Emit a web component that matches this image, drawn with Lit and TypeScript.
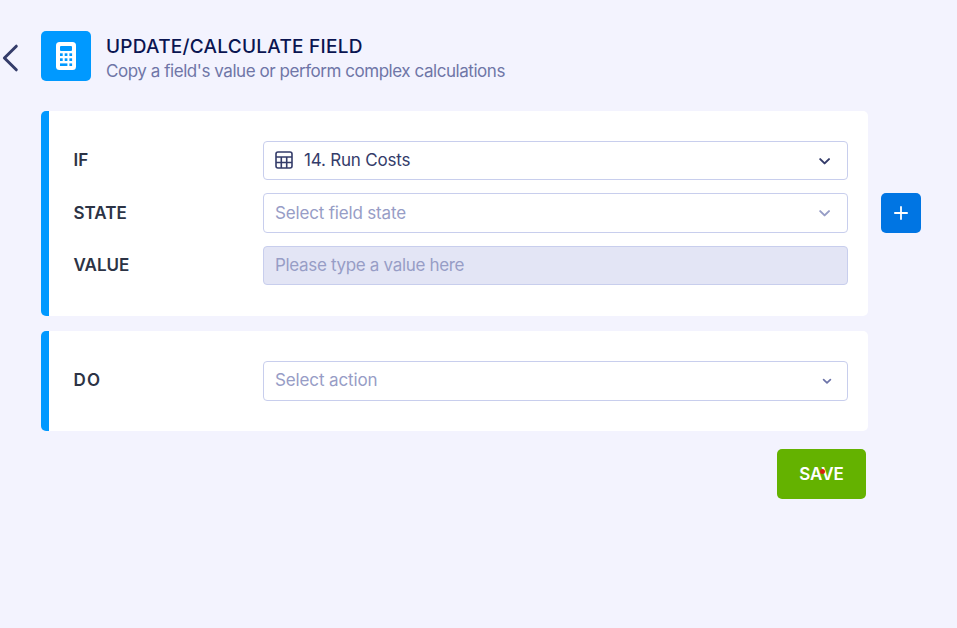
import { LitElement, html, css, svg, nothing } from "lit";
import { customElement, property } from "lit/decorators.js";
import { classMap } from "lit/directives/class-map.js";

const chevron = (size: "large" | "small") => html`
  <svg class="chevron" width="14" height="14" viewBox="0 0 14 14" fill="none" stroke="currentColor"
    stroke-linecap="round" stroke-linejoin="round">
    ${size === "large"
      ? svg`<path d="M2.2 5.1 L6.6 9.4 L11 5.1" stroke-width="2" />`
      : svg`<path d="M5.6 5.6 L9 8.8 L12.4 5.6" stroke-width="1.7" />`}
  </svg>`;

const tableIcon = html`
  <svg class="table-icon" width="18" height="18" viewBox="0 0 18 18" fill="none" stroke="currentColor" stroke-width="1.6">
    <rect x="1" y="1" width="16" height="16" rx="2" />
    <path d="M1 6H17M1 11.5H17M6.3 6V17M11.7 6V17" />
  </svg>`;

@customElement("rule-field")
export class RuleField extends LitElement {
  @property() label = "";
  @property() text = "";
  @property() kind = "select";
  @property() arrow: "large" | "small" = "large";
  @property({ type: Boolean }) filled = false;

  static styles = css`
    :host { display: flex; align-items: stretch; }
    .label {
      width: 189.5px; flex: none; display: flex; align-items: center; box-sizing: border-box;
      padding-bottom: var(--lift, 0px); letter-spacing: var(--label-tracking, 0);
      font-size: 17px; font-weight: 600; color: #2c3345;
    }
    .box {
      flex: 1; display: flex; align-items: center; box-sizing: border-box;
      border: 1px solid #c8ceed; border-radius: 4px; background: #fff;
      padding: 0 15px 0 11px; color: #979dc6; font-size: 17px;
    }
    .box.filled { color: #343c6a; }
    .box.input { background: #e3e5f5; }
    .table-icon { margin: 0 11px 1px 0; flex: none; }
    .value {
      flex: 1; white-space: nowrap; letter-spacing: var(--value-tracking, 0);
      padding-bottom: var(--lift, 0px);
    }
    .chevron { flex: none; }
    .arrow { display: flex; }
    .arrow.small { color: #6c73a8; }
  `;

  render() {
    return html`
      <span class="label">${this.label}</span>
      <div class=${classMap({ box: true, filled: this.filled, input: this.kind === "input" })}>
        ${this.filled ? tableIcon : nothing}
        <span class="value">${this.text}</span>
        ${this.kind === "select"
          ? html`<span class=${classMap({ arrow: true, small: this.arrow === "small" })}>${chevron(this.arrow)}</span>`
          : nothing}
      </div>`;
  }
}

@customElement("app-root")
export class AppRoot extends LitElement {
  static styles = css`
    :host {
      display: block; box-sizing: border-box; height: 628px; overflow: hidden;
      background: #f3f3fe; font-family: Inter, "Liberation Sans", sans-serif;
      padding-top: 31px;
    }
    header { display: flex; align-items: center; height: 50px; }
    .back { width: 41px; flex: none; display: flex; color: #343c6a; padding-top: 4px; box-sizing: border-box; }
    .badge {
      width: 50px; height: 50px; border-radius: 5px; background: #0099ff; flex: none;
      display: flex; align-items: center; justify-content: center;
    }
    .titles { margin-left: 15px; padding-top: 6px; white-space: nowrap; }
    h1 { margin: 0; font-size: 19px; font-weight: 500; line-height: 25px; letter-spacing: 0.26px; color: #0a1551; }
    p { margin: 0; font-size: 17px; line-height: 25px; letter-spacing: -0.45px; color: #6f76a7; }
    .row { display: flex; align-items: center; margin: 30px 0 0 41px; }
    .row + .row { margin-top: 15px; }
    .card {
      width: 827px; box-sizing: border-box; background: #fff; border-left: 8px solid #0099ff;
      border-radius: 5px; padding: 30px 20px 30px 24.5px;
      display: flex; flex-direction: column; gap: 13px;
    }
    .conditions { padding-bottom: 31px; }
    rule-field { height: 39px; --lift: 2px; --value-tracking: -0.2px; }
    .state { height: 40px; --lift: 0px; --value-tracking: -0.17px; }
    .typed { --value-tracking: -0.33px; }
    .action { height: 40px; --lift: 2px; --label-tracking: 1.2px; --value-tracking: -0.12px; }
    .add {
      width: 40px; height: 40px; margin: 0 0 1px 13px; border: 0; padding: 0; border-radius: 5px;
      background: #0075e3; display: flex; align-items: center; justify-content: center;
    }
    .actions { width: 866px; display: flex; justify-content: flex-end; margin-top: 18px; }
    .save {
      position: relative; width: 89px; height: 50px; border: 0; border-radius: 5px; background: #64b200; color: #fff;
      font: 600 17px Inter, "Liberation Sans", sans-serif; padding: 0;
    }
    .pointer { position: absolute; left: 42.5px; top: 19.5px; width: 5px; height: 5px; border-radius: 50%; background: #d8230f; }
  `;

  render() {
    return html`
      <header>
        <div class="back">
          <svg width="22" height="30" viewBox="0 0 22 30" fill="none" stroke="currentColor" stroke-width="3"
            stroke-linecap="round" stroke-linejoin="round"><path d="M16.3 3.2 L4.4 15 L16.3 26.8" /></svg>
        </div>
        <div class="badge">
          <svg width="20" height="28" viewBox="0 0 20 28">
            <rect x="0" y="0" width="20" height="28" rx="3.5" fill="#fff" />
            <g fill="#0099ff">
              <rect x="4" y="4" width="12" height="5" rx="1" />
              <rect x="4" y="11.3" width="2.7" height="2.7" /><rect x="8.7" y="11.3" width="2.7" height="2.7" /><rect x="13.4" y="11.3" width="2.7" height="2.7" />
              <rect x="4" y="16.3" width="2.7" height="2.7" /><rect x="8.7" y="16.3" width="2.7" height="2.7" /><rect x="13.4" y="16.3" width="2.7" height="2.7" />
              <rect x="4" y="21.4" width="7.4" height="2.6" /><rect x="13.4" y="21.4" width="2.7" height="2.6" />
            </g>
          </svg>
        </div>
        <div class="titles">
          <h1>UPDATE/CALCULATE FIELD</h1>
          <p>Copy a field's value or perform complex calculations</p>
        </div>
      </header>
      <div class="row">
        <section class="card conditions">
          <rule-field label="IF" text="14. Run Costs" filled></rule-field>
          <rule-field class="state" label="STATE" text="Select field state"></rule-field>
          <rule-field class="typed" label="VALUE" text="Please type a value here" kind="input"></rule-field>
        </section>
        <button class="add" aria-label="Add">
          <svg width="14" height="14" viewBox="0 0 14 14" stroke="#fff" stroke-width="1.8" stroke-linecap="round"><path d="M7 .9V13.1M.9 7H13.1" /></svg>
        </button>
      </div>
      <div class="row">
        <section class="card">
          <rule-field class="action" label="DO" text="Select action" arrow="small"></rule-field>
        </section>
      </div>
      <div class="actions">
        <button class="save">SAVE<span class="pointer"></span></button>
      </div>`;
  }
}
